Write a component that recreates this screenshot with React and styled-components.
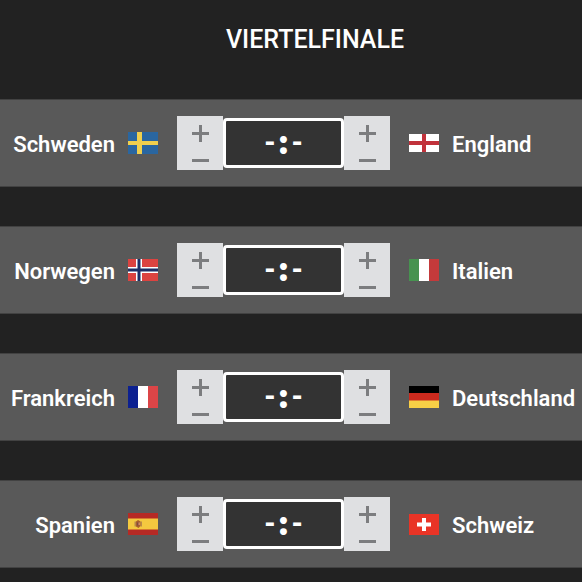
import { useState } from "react";
import styled, { createGlobalStyle } from "styled-components";

const GlobalStyle = createGlobalStyle`
  * {
    box-sizing: border-box;
  }

  body {
    margin: 0;
    background-color: #222222;
    color: #ffffff;
    font-family: Roboto, "Liberation Sans", sans-serif;
    overflow-x: hidden;
  }
`;

const Bracket = styled.main`
  padding: 25px 0 15px;
`;

const Title = styled.h1`
  margin: 0 0 44px;
  padding-left: 48px;
  font-size: 25px;
  font-weight: 500;
  line-height: 30px;
  text-align: center;
  text-transform: uppercase;
`;

const MatchList = styled.ul`
  display: flex;
  flex-direction: column;
  gap: 39px;
  margin: 0;
  padding: 0;
  list-style: none;
`;

const MatchRow = styled.li`
  display: grid;
  grid-template-columns: minmax(0, 1fr) auto minmax(0, 1fr);
  align-items: center;
  gap: 19px;
  height: 88px;
  padding-right: 15px;
  background-color: #595959;
  border-top: 1px solid #424242;
  border-bottom: 1px solid #424242;
`;

const Team = styled.div`
  display: flex;
  flex-direction: ${({ $home }) => ($home ? "row-reverse" : "row")};
  align-items: center;
  gap: 13px;

  svg {
    flex: none;
    display: block;
  }
`;

const TeamName = styled.span`
  padding-top: 4px;
  font-size: 22px;
  font-weight: 600;
  line-height: 28px;
  white-space: nowrap;
`;

const ScoreBox = styled.div`
  display: flex;
  align-items: center;
`;

const Stepper = styled.div`
  display: flex;
  flex-direction: column;
  width: 46px;
  background-color: #dfe0e2;
`;

const StepButton = styled.button`
  display: flex;
  justify-content: center;
  align-items: center;
  height: ${({ $size }) => $size};
  padding: 0;
  border: none;
  background: none;
  color: #7c7d7f;
  cursor: pointer;
`;

const Score = styled.output`
  display: flex;
  justify-content: center;
  align-items: center;
  gap: 4px;
  width: 121px;
  height: 50px;
  padding-bottom: 4px;
  border: 3px solid #ffffff;
  border-radius: 4px;
  background-color: #333333;
  font-family: Lato, sans-serif;
  font-size: 30px;
  font-weight: 900;
  line-height: 30px;
`;

const Colon = styled.span`
  -webkit-text-stroke: 2px #ffffff;
`;

const flags = {
  se: (
    <>
      <path fill="#2a66a0" d="M0 0h30v22H0z" />
      <path fill="#f0cf4d" d="M9 0h5v22H9zM0 9h30v4H0z" />
    </>
  ),
  en: (
    <>
      <path fill="#ffffff" d="M0 0h30v18H0z" />
      <path fill="#c1323b" d="M13 0h4v18h-4zM0 7h30v4H0z" />
    </>
  ),
  no: (
    <>
      <path fill="#dc4340" d="M0 0h30v22H0z" />
      <path fill="#ffffff" d="M8 0h6v22H8zM0 8h30v6H0z" />
      <path fill="#1d2f66" d="M9.500 0h3v22h-3zM0 9.500h30v3H0z" />
    </>
  ),
  it: (
    <>
      <path fill="#479250" d="M0 0h10v22H0z" />
      <path fill="#ffffff" d="M10 0h10v22H10z" />
      <path fill="#c43a3b" d="M20 0h10v22H20z" />
    </>
  ),
  fr: (
    <>
      <path fill="#0c2090" d="M0 0h10v22H0z" />
      <path fill="#ffffff" d="M10 0h10v22H10z" />
      <path fill="#dc4547" d="M20 0h10v22H20z" />
    </>
  ),
  de: (
    <>
      <path fill="#000000" d="M0 0h30v7H0z" />
      <path fill="#cb2a1e" d="M0 7h30v8H0z" />
      <path fill="#f7cf46" d="M0 14.500h30V22H0z" />
    </>
  ),
  es: (
    <>
      <path fill="#b52a25" d="M0 0h30v22H0z" />
      <path fill="#f4c93f" d="M0 5.500h30v11H0z" />
      <path fill="#b98a4a" d="M6.500 8.500H8v5H6.500zM12.500 8.500H14v5h-1.500z" />
      <path fill="#a9602c" d="M8 8.500l2-1.500 2.500 1.500V13l-2 2L8 13.500z" />
      <path fill="#7d4a45" d="M9 9.500h1.500v3H9z" />
      <path fill="#d08a6a" d="M10.500 9.500H12V12h-1.500z" />
    </>
  ),
  ch: (
    <>
      <path fill="#e93426" d="M0 0h30v21H0z" />
      <path fill="#ffffff" d="M13 4h4v4.500h5v4h-5V17h-4v-4.500H8v-4h5z" />
    </>
  ),
};

const flagHeights = { en: 18, ch: 21 };

const matches = [
  { home: ["se", "Schweden"], away: ["en", "England"] },
  { home: ["no", "Norwegen"], away: ["it", "Italien"] },
  { home: ["fr", "Frankreich"], away: ["de", "Deutschland"] },
  { home: ["es", "Spanien"], away: ["ch", "Schweiz"] },
];

function Flag({ code }) {
  const height = flagHeights[code] || 22;
  return (
    <svg width="30" height={height} viewBox={`0 0 30 ${height}`} aria-hidden="true">
      {flags[code]}
    </svg>
  );
}

function GoalStepper({ team, goals, setGoals }) {
  const add = () => setGoals(goals === null ? 0 : goals + 1);
  // below zero the tip is empty again
  const remove = () => setGoals(goals ? goals - 1 : null);

  return (
    <Stepper>
      <StepButton type="button" $size="34px" aria-label={`${team} plus`} onClick={add}>
        <svg width="17" height="17" viewBox="0 0 17 17">
          <path fill="currentColor" d="M7 0h3v7h7v3h-7v7H7v-7H0V7h7z" />
        </svg>
      </StepButton>
      <StepButton type="button" $size="20px" aria-label={`${team} minus`} onClick={remove}>
        <svg width="17" height="3" viewBox="0 0 17 3">
          <path fill="currentColor" d="M0 0h17v3H0z" />
        </svg>
      </StepButton>
    </Stepper>
  );
}

function Match({ home, away }) {
  const [homeGoals, setHomeGoals] = useState(null);
  const [awayGoals, setAwayGoals] = useState(null);

  return (
    <MatchRow>
      <Team $home>
        <Flag code={home[0]} />
        <TeamName>{home[1]}</TeamName>
      </Team>
      <ScoreBox>
        <GoalStepper team={home[1]} goals={homeGoals} setGoals={setHomeGoals} />
        <Score>
          <span>{homeGoals ?? "-"}</span>
          <Colon>:</Colon>
          <span>{awayGoals ?? "-"}</span>
        </Score>
        <GoalStepper team={away[1]} goals={awayGoals} setGoals={setAwayGoals} />
      </ScoreBox>
      <Team>
        <Flag code={away[0]} />
        <TeamName>{away[1]}</TeamName>
      </Team>
    </MatchRow>
  );
}

export default function App() {
  return (
    <>
      <GlobalStyle />
      <Bracket>
        <Title>Viertelfinale</Title>
        <MatchList>
          {matches.map((match) => (
            <Match key={match.home[0]} home={match.home} away={match.away} />
          ))}
        </MatchList>
      </Bracket>
    </>
  );
}
